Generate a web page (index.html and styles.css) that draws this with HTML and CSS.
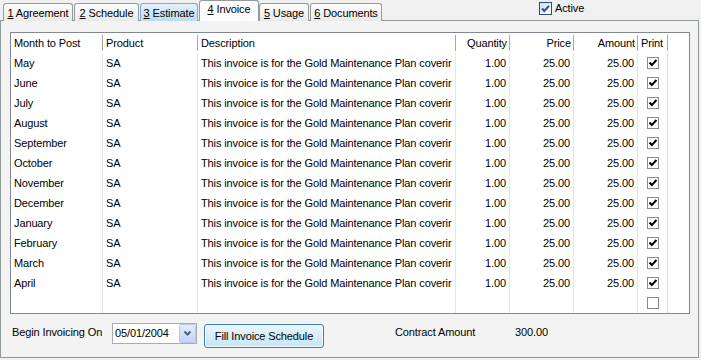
FILE: index.html
```html
<!DOCTYPE html>
<html lang="en">

<head>
    <meta charset="UTF-8">
    <meta name="viewport" content="width=device-width, initial-scale=1.0">
    <title>Invoice Schedule</title>
    <link rel="stylesheet" href="styles.css">
</head>

<body>
    <div class="tab-strip">
        <div class="tabs">
            <span class="tab tab-agreement"><u>1</u> Agreement</span>
            <span class="tab tab-schedule"><u>2</u> Schedule</span>
            <span class="tab tab-estimate hover"><u>3</u> Estimate</span>
            <span class="tab tab-invoice selected"><u>4</u> Invoice</span>
            <span class="tab tab-usage"><u>5</u> Usage</span>
            <span class="tab tab-documents"><u>6</u> Documents</span>
        </div>
        <label class="active-box">
            <span class="xp-check">
                <svg width="11" height="11" viewBox="0 0 11 11">
                    <polyline points="2,5.5 4.3,8 9,2.8" fill="none" stroke="#2a4f8f" stroke-width="2"/>
                </svg>
            </span>
            Active
        </label>
    </div>

    <div class="panel">
        <div class="grid">
            <div class="grid-row grid-head">
                <div class="cell"><span>Month to Post</span></div>
                <div class="cell"><span>Product</span></div>
                <div class="cell"><span>Description</span></div>
                <div class="cell num"><span>Quantity</span></div>
                <div class="cell num"><span>Price</span></div>
                <div class="cell num"><span>Amount</span></div>
                <div class="cell"><span>Print</span></div>
                <div class="cell filler"></div>
            </div>
            <div id="rows"></div>
            <div class="grid-row">
                <div class="cell"></div>
                <div class="cell"></div>
                <div class="cell"></div>
                <div class="cell num"></div>
                <div class="cell num"></div>
                <div class="cell num"></div>
                <div class="cell print"><span class="box"></span></div>
                <div class="cell filler"></div>
            </div>
        </div>

        <div class="footer">
            <span class="label begin-label">Begin Invoicing On</span>
            <div class="date-field">
                <span class="date-text">05/01/2004</span>
                <span class="drop">
                    <svg width="9" height="7" viewBox="0 0 9 7">
                        <polyline points="1.5,1.5 4.5,4.5 7.5,1.5" fill="none" stroke="#4d6185" stroke-width="2"/>
                    </svg>
                </span>
            </div>
            <button class="fill-btn">Fill Invoice Schedule</button>
            <span class="label contract-label">Contract Amount</span>
            <span class="label">300.00</span>
        </div>
    </div>

    <script>
        const months = ['May', 'June', 'July', 'August', 'September', 'October', 'November',
            'December', 'January', 'February', 'March', 'April'];
        // the grid cuts the description off at the column edge
        const desc = 'This invoice is for the Gold Maintenance Plan coverir';
        const check = '<svg width="10" height="10" viewBox="0 0 10 10">' +
            '<polyline points="1.5,4.5 3.8,7 8.5,2" fill="none" stroke="#000" stroke-width="2"/></svg>';

        const rowsEl = document.getElementById('rows');
        months.forEach(month => {
            const row = document.createElement('div');
            row.className = 'grid-row';
            row.innerHTML =
                '<div class="cell">' + month + '</div>' +
                '<div class="cell">SA</div>' +
                '<div class="cell">' + desc + '</div>' +
                '<div class="cell num">1.00</div>' +
                '<div class="cell num">25.00</div>' +
                '<div class="cell num">25.00</div>' +
                '<div class="cell print"><span class="box">' + check + '</span></div>' +
                '<div class="cell filler"></div>';
            rowsEl.appendChild(row);
        });
    </script>
</body>

</html>
```

FILE: styles.css
```css
* {
    box-sizing: border-box;
}

body {
    margin: 0;
    width: 701px;
    height: 360px;
    overflow: hidden;
    background-color: #f0f0f0;
    font-family: "Liberation Sans", Arial, sans-serif;
    font-size: 11px;
    letter-spacing: -0.12px;
    color: #000;
}

u {
    text-decoration: underline;
    text-underline-offset: 1px;
}

/* tabs */

.tab-strip {
    display: flex;
    align-items: flex-end;
    height: 21px;
    padding-left: 3px;
    position: relative;
    z-index: 1;
}

.tabs {
    display: flex;
    align-items: flex-end;
    height: 21px;
}

.tab {
    height: 18px;
    margin-right: 1px;
    padding-top: 2px;
    line-height: 15px;
    text-align: center;
    white-space: nowrap;
    border: 1px solid #919b9c;
    border-bottom: none;
    border-radius: 3px 3px 0 0;
    background: linear-gradient(#fdfdfd, #e9e9e8);
}

.tab-agreement { width: 70px; }
.tab-schedule { width: 65px; }
.tab-estimate { width: 58px; }
.tab-invoice { width: 60px; margin-right: 0; }
.tab-usage { width: 50px; }
.tab-documents { width: 72px; }

.tab.hover {
    border-color: #8aa6c1;
    background: linear-gradient(#e3f1fb, #bcdcf4);
}

.tab.selected {
    height: 21px;
    padding-top: 1px;
    background: #fcfcfc;
}

.active-box {
    align-self: flex-start;
    display: flex;
    align-items: center;
    gap: 3px;
    margin-top: 2px;
    margin-left: 156px;
    line-height: 13px;
}

.xp-check {
    width: 13px;
    height: 13px;
    border: 1px solid #1c5180;
    background: linear-gradient(135deg, #d3dfec, #ffffff);
    display: flex;
    align-items: center;
    justify-content: center;
}

/* tab page */

.panel {
    margin-top: -1px;
    width: 699px;
    height: 338px;
    padding: 11px 9px 0 9px;
    border: 1px solid #919b9c;
    background-color: #f3f3f3;
}

.grid {
    width: 680px;
    height: 282px;
    border: 1px solid #828790;
    background-color: #fff;
}

.grid-row {
    display: grid;
    grid-template-columns: 92px 95px 258px 54px 64px 64px 30px 21px;
    height: 20px;
}

.cell {
    padding: 0 3px;
    line-height: 20px;
    white-space: nowrap;
    overflow: hidden;
    border-right: 1px solid #e6e6e6;
}

.cell.num {
    text-align: right;
}

.cell.filler {
    border-right: none;
}

.grid-head .cell {
    padding: 2px 0 0 0;
    border-right: none;
}

.grid-head .cell span {
    display: block;
    height: 16px;
    padding: 0 2px 0 3px;
    line-height: 16px;
    border-right: 1px solid #a9a9a9;
}

.grid-head .cell.filler {
    border-right: none;
}

.cell.print {
    display: flex;
    align-items: center;
    justify-content: center;
    padding: 0;
    border-right-color: #dadada;
}

.box {
    width: 12px;
    height: 12px;
    border: 1px solid #8a8a8a;
    background-color: #fff;
    display: flex;
    align-items: center;
    justify-content: center;
}

/* bottom controls */

.footer {
    display: flex;
    align-items: flex-start;
    margin-top: 9px;
}

.label {
    line-height: 19px;
    white-space: nowrap;
}

.begin-label {
    width: 102px;
    padding-left: 2px;
}

.date-field {
    display: flex;
    width: 85px;
    height: 21px;
    border: 1px solid #a5acb5;
    background-color: #fff;
}

.date-text {
    flex: 1;
    padding-left: 2px;
    line-height: 19px;
}

.drop {
    width: 17px;
    height: 19px;
    border: 1px solid #b7c8ee;
    border-radius: 2px;
    background: linear-gradient(#e6eefc, #c2d3f8);
    display: flex;
    align-items: center;
    justify-content: center;
}

.fill-btn {
    width: 120px;
    height: 24px;
    margin-top: 1px;
    margin-left: 7px;
    padding: 0;
    font-family: inherit;
    font-size: 11px;
    letter-spacing: -0.12px;
    color: #000;
    border: 1px solid #3c7fb1;
    border-radius: 3px;
    background: linear-gradient(#eaf6fd, #c6e5f7);
    box-shadow: inset 0 0 0 1px #f4fbff;
}

.contract-label {
    width: 120px;
    margin-left: 71px;
}
```
